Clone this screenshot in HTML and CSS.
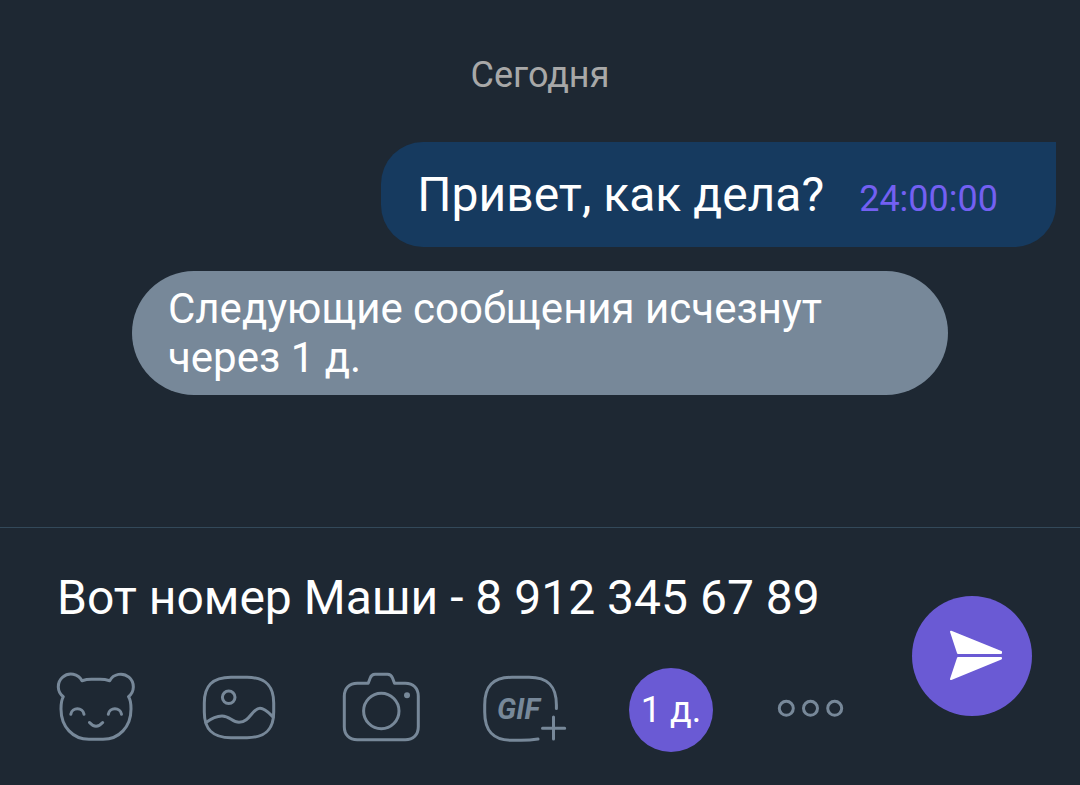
FILE: index.html
```
<!DOCTYPE html>
<html lang="ru">
<head>
<meta charset="utf-8">
<meta name="viewport" content="width=device-width, initial-scale=1">
<title>Чат</title>
<link rel="stylesheet" href="styles.css">
</head>
<body>
<main class="chat">
  <time class="date">Сегодня</time>
  <article class="message">
    <p class="message-text">Привет, как дела?</p>
    <span class="countdown">24:00:00</span>
  </article>
  <p class="notice">Следующие сообщения исчезнут через 1 д.</p>
</main>
<form class="composer">
  <div class="editor">
    <input class="field" type="text" aria-label="Сообщение" value="Вот номер Маши - 8 912 345 67 89">
    <div class="tools">
      <button class="tool" type="button" aria-label="Стикеры">
        <svg class="icon" viewBox="0 0 84 84">
          <path d="M29 12.700A12.600 12.600 0 1 0 10.300 28.700C8.500 31.500 8 36 8 41C8 59 20 71.300 36 71.300H50C66 71.300 78 59 78 41C78 36 77.500 31.500 75.500 28.700A12.600 12.600 0 1 0 56.700 12.700Q52 11.300 47 11.300H38.500Q33.500 11.300 29 12.700Z"/>
          <path d="M17.800 46.200C19 39 29.800 39 31 46.200M55.300 46.200C56.500 39 67.300 39 68.500 46.200M36.500 54.500Q43 62 49.700 54.500"/>
        </svg>
      </button>
      <button class="tool" type="button" aria-label="Галерея">
        <svg class="icon" viewBox="0 0 84 84">
          <path d="M34 9.300H50C69 9.300 76.700 18 76.700 35V44C76.700 61 69 69.700 50 69.700H34C15 69.700 7.300 61 7.300 44V35C7.300 18 15 9.300 34 9.300Z"/>
          <circle cx="31.700" cy="29.300" r="6.300"/>
          <path d="M9 54.500C15 50 20 48 25 48C33 48 35 54.300 42 54.300C53 54.300 55 40.300 63 40.300C68 40.300 72 45 76 49"/>
        </svg>
      </button>
      <button class="tool" type="button" aria-label="Камера">
        <svg class="icon" viewBox="0 0 84 84">
          <path d="M16.300 15.200H27.200L29.200 10C30.200 7.300 31.500 6.300 34 6.300H46.500C49 6.300 50.500 7.300 51.500 10L53.500 15.200H64.300C72.300 15.200 77.300 20.200 77.300 28.200V58.700C77.300 66.700 72.300 71.700 64.300 71.700H16.300C8.300 71.700 3.300 66.700 3.300 58.700V28.200C3.300 20.200 8.300 15.200 16.300 15.200Z"/>
          <circle cx="40.300" cy="43" r="17.700"/>
          <circle class="solid" cx="66" cy="27.300" r="3"/>
        </svg>
      </button>
      <button class="tool" type="button" aria-label="GIF">
        <svg class="icon" viewBox="0 0 84 84">
          <path d="M71.400 40.500V37C71.400 18 63 9.300 44 9.300H27C8 9.300-.3 18-.3 37V44C-.3 63 8 72.300 27 72.300H36Q45 72.300 53 71"/>
          <path d="M57.500 60.300H79.700M68.500 49V71"/>
          <text class="gif" x="12" y="51">GIF</text>
        </svg>
      </button>
      <button class="tool timer" type="button">1 д.</button>
      <button class="tool" type="button" aria-label="Ещё">
        <svg class="icon" viewBox="0 0 84 84">
          <circle cx="13.300" cy="40.300" r="7"/>
          <circle cx="37.500" cy="40.300" r="7"/>
          <circle cx="61.700" cy="40.300" r="7"/>
        </svg>
      </button>
    </div>
  </div>
  <button class="send" type="submit" aria-label="Отправить">
    <svg class="arrow" viewBox="0 0 120 120">
      <path d="M39 35.700L89 56V57H46Z"/>
      <path d="M46 62H89V62.500L39 83Z"/>
    </svg>
  </button>
</form>
</body>
</html>
```
FILE: styles.css
```
* {
  box-sizing: border-box;
}

body {
  display: flex;
  flex-direction: column;
  min-height: 100vh;
  margin: 0;
  background: #1e2833;
  color: #fff;
  font-family: Roboto, "Noto Sans", sans-serif;
}

.chat {
  display: flex;
  flex: 1;
  flex-direction: column;
  align-items: center;
  padding: 54px 24px;
}

.date {
  margin-bottom: 46px;
  color: #a8a8a8;
  font-size: 36px;
  line-height: 42px;
}

.message {
  display: flex;
  align-items: baseline;
  align-self: flex-end;
  gap: 35px;
  padding: 24px 58px 24px 36px;
  border-radius: 42px 0 42px 42px;
  background: #163a5f;
}

.message-text {
  margin: 0;
  font-size: 48px;
  line-height: 57px;
}

.countdown {
  color: #7360f2;
  font-size: 36px;
  line-height: 42px;
}

.notice {
  width: 100%;
  max-width: 816px;
  margin: 24px 0 0;
  padding: 13px 36px;
  border-radius: 62px;
  background: #778899;
  font-size: 42px;
  line-height: 49px;
}

.composer {
  display: flex;
  align-items: center;
  justify-content: space-between;
  gap: 24px;
  padding: 0 48px 2px 53px;
  border-top: 1px solid #33495a;
}

.editor {
  flex: 1;
  min-width: 0;
  padding: 42px 0 31px;
}

.field {
  display: block;
  width: 100%;
  height: 56px;
  margin-bottom: 42px;
  padding: 0 4px;
  border: 0;
  outline: 0;
  background: transparent;
  color: #fff;
  font: 48px/56px Roboto, "Noto Sans", sans-serif;
}

.tools {
  display: flex;
  gap: 60px;
}

.tool {
  flex: none;
  width: 84px;
  height: 84px;
  padding: 0;
  border: 0;
  background: none;
  color: #fff;
  font: 36px/42px Roboto, "Noto Sans", sans-serif;
}

.timer {
  border-radius: 50%;
  background: #6a5ad4;
}

.icon,
.arrow {
  display: block;
  width: 100%;
  height: 100%;
  overflow: visible;
}

.icon {
  fill: none;
  stroke: #778899;
  stroke-width: 3;
  stroke-linecap: round;
  stroke-linejoin: round;
}

.icon .solid {
  fill: #778899;
  stroke: none;
}

.icon .gif {
  fill: #778899;
  stroke: none;
  font: italic 700 29px Roboto, sans-serif;
}

.send {
  flex: none;
  width: 120px;
  height: 120px;
  padding: 0;
  border: 0;
  border-radius: 50%;
  background: #6a5ad4;
}

.arrow {
  fill: #fff;
  stroke: #fff;
  stroke-width: 2;
  stroke-linejoin: round;
}
```
